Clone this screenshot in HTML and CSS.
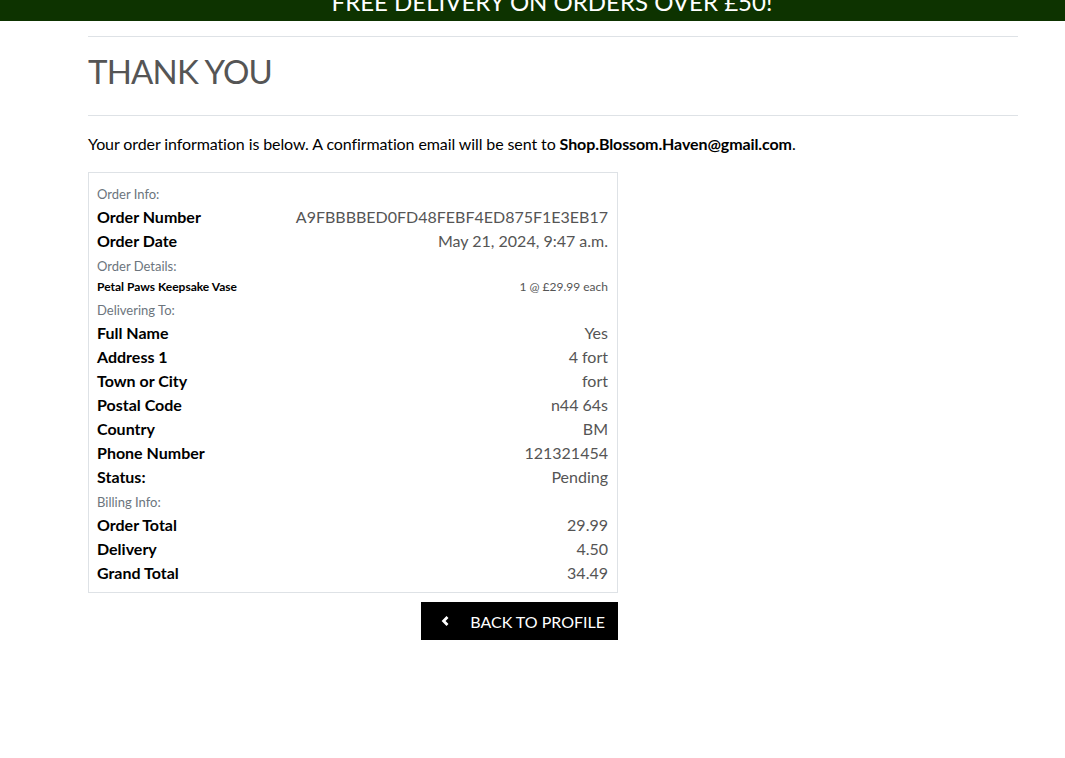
FILE: index.html
```html
<!DOCTYPE html>
<html lang="en">
<head>
<meta charset="utf-8">
<title>Thank You</title>
<link rel="stylesheet" href="styles.css">
</head>
<body>
<div class="banner"><span class="banner-text">FREE DELIVERY ON ORDERS OVER £50!</span></div>
<main class="page">
  <hr class="rule">
  <h1 class="title">THANK YOU</h1>
  <hr class="rule">
  <p class="intro">Your order information is below. A confirmation email will be sent to <strong>Shop.Blossom.Haven@gmail.com</strong>.</p>
  <div class="summary">
    <div class="card">
      <div class="section">Order Info:</div>
      <div class="row"><span class="key">Order Number</span><span class="val">A9FBBBBED0FD48FEBF4ED875F1E3EB17</span></div>
      <div class="row"><span class="key">Order Date</span><span class="val">May 21, 2024, 9:47 a.m.</span></div>
      <div class="section">Order Details:</div>
      <div class="row item"><span class="key">Petal Paws Keepsake Vase</span><span class="val">1 @ £29.99 each</span></div>
      <div class="section">Delivering To:</div>
      <div class="row"><span class="key">Full Name</span><span class="val">Yes</span></div>
      <div class="row"><span class="key">Address 1</span><span class="val">4 fort</span></div>
      <div class="row"><span class="key">Town or City</span><span class="val">fort</span></div>
      <div class="row"><span class="key">Postal Code</span><span class="val">n44 64s</span></div>
      <div class="row"><span class="key">Country</span><span class="val">BM</span></div>
      <div class="row"><span class="key">Phone Number</span><span class="val">121321454</span></div>
      <div class="row"><span class="key">Status:</span><span class="val">Pending</span></div>
      <div class="section">Billing Info:</div>
      <div class="row"><span class="key">Order Total</span><span class="val">29.99</span></div>
      <div class="row"><span class="key">Delivery</span><span class="val">4.50</span></div>
      <div class="row"><span class="key">Grand Total</span><span class="val">34.49</span></div>
    </div>
    <div class="actions">
      <a class="btn" href="#">
        <svg class="chev" width="10" height="10" viewBox="0 0 10 10"><path d="M7.5 1.1 L3.6 5 L7.5 8.9" fill="none" stroke="#fff" stroke-width="2.8" stroke-linejoin="miter"/></svg>
        <span>BACK TO PROFILE</span>
      </a>
    </div>
  </div>
</main>
</body>
</html>
```
FILE: styles.css
```css
* { box-sizing: border-box; }
body {
  margin: 0;
  font-family: Lato, "Open Sans", "Liberation Sans", sans-serif;
  color: #000;
  background: #fff;
}
.banner {
  height: 21px;
  background: #0d3300;
  overflow: hidden;
  text-align: center;
}
.banner-text {
  display: block;
  color: #fff;
  font-size: 24px;
  line-height: 24px;
  margin-top: -10px;
  padding-left: 39px;
}
.page {
  padding: 15px 47px 0 88px;
}
.rule {
  border: 0;
  border-top: 1px solid #dee2e6;
  margin: 0;
}
.title {
  font-weight: 400;
  font-size: 33px;
  line-height: 40px;
  color: #555;
  margin: 14px 0 24px;
  letter-spacing: -0.8px;
}
.intro {
  font-size: 16px;
  line-height: 24px;
  margin: 16px 0 16px;
  letter-spacing: -0.1px;
}
.intro strong { font-weight: 700; }
.summary { width: 530px; }
.card {
  border: 1px solid #dee2e6;
  padding: 8px 9px 7px 8px;
}
.section {
  font-size: 13px;
  line-height: 21px;
  margin-top: 3px;
  color: #6c757d;
}
.row {
  display: flex;
  justify-content: space-between;
  font-size: 16px;
  line-height: 24px;
}
.key { font-weight: 700; color: #000; }
.val { color: #555; }
.row.item {
  font-size: 12px;
  line-height: 20px;
}
.actions {
  display: flex;
  justify-content: flex-end;
  margin-top: 9px;
}
.btn {
  display: flex;
  align-items: center;
  gap: 20px;
  height: 38px;
  padding: 0 13px 0 19px;
  background: #000;
  color: #fff;
  text-decoration: none;
  font-size: 16px;
}
.chev { display: block; flex: none; }
```
